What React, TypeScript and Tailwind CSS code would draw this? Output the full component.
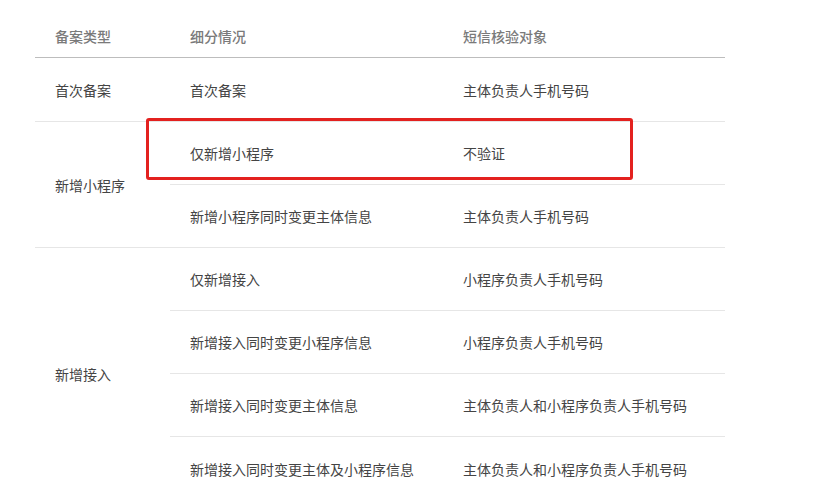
const FONT = { fontFamily: '"Noto Sans CJK SC", "Noto Sans", sans-serif' };

type Sub = { detail: string; target: string; highlight?: boolean };
type Group = { type: string; rows: Sub[] };

const groups: Group[] = [
  { type: "首次备案", rows: [{ detail: "首次备案", target: "主体负责人手机号码" }] },
  {
    type: "新增小程序",
    rows: [
      { detail: "仅新增小程序", target: "不验证", highlight: true },
      { detail: "新增小程序同时变更主体信息", target: "主体负责人手机号码" },
    ],
  },
  {
    type: "新增接入",
    rows: [
      { detail: "仅新增接入", target: "小程序负责人手机号码" },
      { detail: "新增接入同时变更小程序信息", target: "小程序负责人手机号码" },
      { detail: "新增接入同时变更主体信息", target: "主体负责人和小程序负责人手机号码" },
      { detail: "新增接入同时变更主体及小程序信息", target: "主体负责人和小程序负责人手机号码" },
    ],
  },
];

export default function App() {
  return (
    <div className="w-[814px] h-[500px] overflow-hidden bg-white text-[14px] text-[#444]" style={FONT}>
      <div className="ml-[35px] w-[690px]">
        <div className="flex h-[58px] border-b border-[#bdbdbd] pt-[26px] leading-5 font-medium text-[#7a7a7a]">
          <div className="w-[135px] pl-5">备案类型</div>
          <div className="w-[273px] pl-5">细分情况</div>
          <div className="flex-1 pl-5">短信核验对象</div>
        </div>
        {groups.map((g, gi) => {
          const lastGroup = gi === groups.length - 1;
          return (
            <div key={g.type} className="flex">
              <div
                className={
                  "w-[135px] pl-5 flex items-center leading-5 " +
                  (lastGroup ? "" : "border-b border-[#e6e6e6]")
                }
              >
                {g.type}
              </div>
              <div className="flex-1 flex flex-col">
                {g.rows.map((r, ri) => (
                  <div
                    key={r.detail}
                    className={
                      "relative flex items-center leading-5 " +
                      (gi === 0 ? "h-[64px] " : "h-[63px] ") +
                      (lastGroup && ri === g.rows.length - 1 ? "" : "border-b border-[#e6e6e6]")
                    }
                  >
                    <div className="w-[273px] pl-5">{r.detail}</div>
                    <div className="flex-1 pl-5">{r.target}</div>
                    {r.highlight && (
                      <div className="absolute left-[-24px] top-[-4px] w-[487px] h-[62px] border-[3px] border-[#e3211f] rounded-[3px]" />
                    )}
                  </div>
                ))}
              </div>
            </div>
          );
        })}
      </div>
    </div>
  );
}
